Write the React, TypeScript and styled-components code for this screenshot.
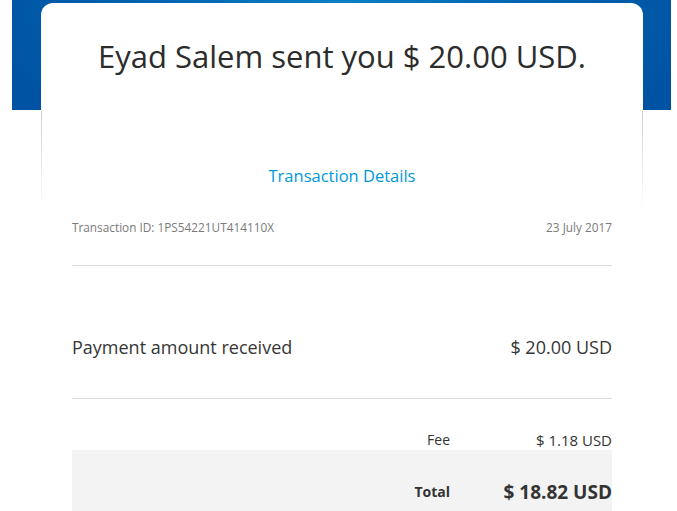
import React from 'react';
import styled, { createGlobalStyle } from 'styled-components';

const Global = createGlobalStyle`
  html, body { margin: 0; padding: 0; background: #fff; }
  body { font-family: "Open Sans", "Noto Sans", sans-serif; color: #2c2e2f; }
  * { box-sizing: border-box; }
`;

const Page = styled.div`
  margin: 0 6px 0 12px;
  padding: 3px 28px 0 29px;
  background:
    radial-gradient(ellipse 55% 160% at 50% 0%, #0a80c2 0%, #0067b3 45%, #0053a3 100%)
    top left / 100% 110px no-repeat;
`;

const Card = styled.main`
  background: #fff;
  border-radius: 12px 12px 0 0;
`;

const Hero = styled.header`
  height: 207px;
  padding: 33px 30px 0;
  text-align: center;
  border-left: 1px solid;
  border-right: 1px solid;
  border-image: linear-gradient(
      to bottom,
      rgba(210, 210, 210, 0) 0,
      rgba(210, 210, 210, 0) 107px,
      #cfcfcf 107px,
      rgba(225, 225, 225, 0) 207px
    ) 1;
  border-radius: 12px 12px 0 0;
`;

const Title = styled.h1`
  margin: 0;
  font-size: 31px;
  line-height: 40px;
  font-weight: 400;
  color: #2c2c2c;
`;

const DetailsLink = styled.a`
  display: inline-block;
  margin-top: 89px;
  font-size: 16.5px;
  line-height: 22px;
  color: #0098d9;
  text-decoration: none;
`;

const Details = styled.section`
  padding: 0 31px 0 31px;
`;

const MetaRow = styled.div`
  display: flex;
  justify-content: space-between;
  margin-top: 9px;
  padding-bottom: 30px;
  border-bottom: 1px solid #d9d9d9;
  font-size: 11.8px;
  line-height: 16px;
  color: #7a7a7a;
`;

const AmountRow = styled.div`
  display: flex;
  justify-content: space-between;
  padding: 68px 0 38px;
  border-bottom: 1px solid #d9d9d9;
  font-size: 18px;
  line-height: 26px;
  color: #363636;
`;

const SummaryRow = styled.div<{ $total?: boolean }>`
  display: grid;
  grid-template-columns: 1fr 162px;
  align-items: center;
  font-weight: ${(p) => (p.$total ? 700 : 400)};
  font-size: 14px;
  line-height: ${(p) => (p.$total ? '28px' : '20px')};
  color: #333;
  margin-top: ${(p) => (p.$total ? '0' : '31px')};
`;

const Label = styled.span`
  text-align: right;
`;

const Value = styled.span<{ $big?: boolean }>`
  text-align: right;
  font-size: ${(p) => (p.$big ? '19px' : '15px')};
`;

const TotalBox = styled.div`
  background: #f3f3f3;
  padding: 28px 0 40px;
`;

export default function App() {
  return (
    <>
      <Global />
      <Page>
        <Card>
          <Hero>
            <Title>Eyad Salem sent you $ 20.00 USD.</Title>
            <DetailsLink href="#">Transaction Details</DetailsLink>
          </Hero>
          <Details>
            <MetaRow>
              <span>Transaction ID: 1PS54221UT414110X</span>
              <span>23 July 2017</span>
            </MetaRow>
            <AmountRow>
              <span>Payment amount received</span>
              <span>$ 20.00 USD</span>
            </AmountRow>
            <SummaryRow>
              <Label>Fee</Label>
              <Value>$ 1.18 USD</Value>
            </SummaryRow>
            <TotalBox>
              <SummaryRow $total>
                <Label>Total</Label>
                <Value $big>$ 18.82 USD</Value>
              </SummaryRow>
            </TotalBox>
          </Details>
        </Card>
      </Page>
    </>
  );
}
